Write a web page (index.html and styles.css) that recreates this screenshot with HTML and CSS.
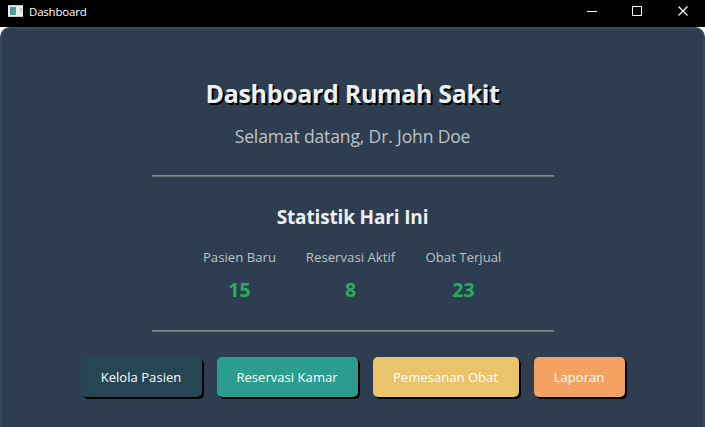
FILE: index.html
```
<!DOCTYPE html>
<html lang="id">
<head>
<meta charset="utf-8">
<title>Dashboard</title>
<link rel="stylesheet" href="styles.css">
</head>
<body>
<header class="titlebar">
  <svg class="app-icon" width="15" height="13" viewBox="0 0 15 13">
    <defs>
      <linearGradient id="pane" x1="0" y1="0" x2="1" y2="1"><stop offset="0" stop-color="#4d83b4"/><stop offset="1" stop-color="#46b47a"/></linearGradient>
    </defs>
    <path fill="#efecec" d="M0 0h15v12H0z"/>
    <path fill="#c9c9cb" d="M0 0h15v1H0zM0 11h15v1H0z"/>
    <path fill="url(#pane)" d="M2 2h6v8H2z"/>
    <path fill="#a9d3cf" d="M12 3h2v3l-2 1z"/>
  </svg>
  <span class="window-name">Dashboard</span>
  <div class="controls">
    <svg width="46" height="27" viewBox="0 0 46 27"><path d="M17 11.5h10" stroke="#fff"/></svg>
    <svg width="46" height="27" viewBox="0 0 46 27"><path d="M16.500 6.500h9v9h-9z" stroke="#fff" fill="none"/></svg>
    <svg width="46" height="27" viewBox="0 0 46 27"><path d="M16.500 6.500l9 9M25.500 6.500l-9 9" stroke="#fff" stroke-width="1.200"/></svg>
  </div>
</header>
<main class="panel">
  <h1 class="title">Dashboard Rumah Sakit</h1>
  <p class="welcome">Selamat datang, Dr. John Doe</p>
  <hr class="rule">
  <h2 class="subtitle">Statistik Hari Ini</h2>
  <section class="stats">
    <div class="stat stat-new"><span class="label">Pasien Baru</span><b class="value">15</b></div>
    <div class="stat stat-active"><span class="label">Reservasi Aktif</span><b class="value">8</b></div>
    <div class="stat stat-sold"><span class="label">Obat Terjual</span><b class="value">23</b></div>
  </section>
  <hr class="rule">
  <nav class="actions">
    <button class="action patients">Kelola Pasien</button>
    <button class="action rooms">Reservasi Kamar</button>
    <button class="action orders">Pemesanan Obat</button>
    <button class="action reports">Laporan</button>
  </nav>
</main>
</body>
</html>
```
FILE: styles.css
```
* { box-sizing: border-box; margin: 0; padding: 0; }
body {
  width: 705px;
  height: 427px;
  overflow: hidden;
  background: #fff;
  font-family: "Open Sans", "Noto Sans", sans-serif;
  display: flex;
  flex-direction: column;
}
.titlebar {
  height: 27px;
  flex: none;
  background: #000;
  color: #fff;
  display: flex;
  align-items: flex-start;
  padding-left: 8px;
}
.app-icon { margin: 5px 6px 0 0; }
.window-name { font-size: 11.500px; line-height: 24px; letter-spacing: -0.2px; }
.controls { display: flex; margin-left: auto; margin-right: -3px; }
.panel {
  flex: 1;
  background: #2e3d50;
  border: 2px solid #34495e;
  border-bottom: 0;
  border-radius: 10px 10px 0 0;
  display: flex;
  flex-direction: column;
  align-items: center;
  white-space: nowrap;
}
.title {
  margin-top: 46px;
  height: 36px;
  line-height: 36px;
  font-size: 25px;
  font-weight: 700;
  letter-spacing: -0.33px;
  color: #ecf0f1;
  text-shadow: 2px 2px 0 #000;
}
.welcome {
  margin-top: 13px;
  height: 25px;
  line-height: 25px;
  font-size: 17.500px;
  letter-spacing: -0.13px;
  color: #bdc3c7;
}
.rule {
  width: 402px;
  height: 2px;
  border: 0;
  background: linear-gradient(#7f8c8d 50%, #64727b 50%);
  margin-top: 26px;
}
.subtitle {
  margin-top: 26px;
  height: 28px;
  line-height: 28px;
  font-size: 19px;
  letter-spacing: -0.15px;
  color: #ecf0f1;
}
.stats { display: flex; gap: 30px; margin-top: 16px; }
.stat { display: flex; flex-direction: column; align-items: center; }
.stat-new { width: 72px; }
.stat-active { width: 90px; }
.stat-sold { width: 76px; }
.label { height: 20px; line-height: 20px; font-size: 13.200px; color: #bdc3c7; }
.value { margin-top: 10px; height: 26px; line-height: 26px; font-size: 19.500px; color: #27ae60; }
.stats + .rule { margin-top: 27px; }
.actions { display: flex; gap: 15px; margin-top: 25px; }
.action {
  height: 40px;
  border: 0;
  border-radius: 5px;
  box-shadow: 2px 2px 0 #000;
  font: 13px "Open Sans", "Noto Sans", sans-serif;
  letter-spacing: 0.05px;
  color: #fff;
  text-align: center;
}
.patients { width: 121px; background: #264653; }
.rooms { width: 141px; background: #2a9d8f; }
.orders { width: 146px; background: #e9c46a; }
.reports { width: 91px; background: #f4a261; }
```
